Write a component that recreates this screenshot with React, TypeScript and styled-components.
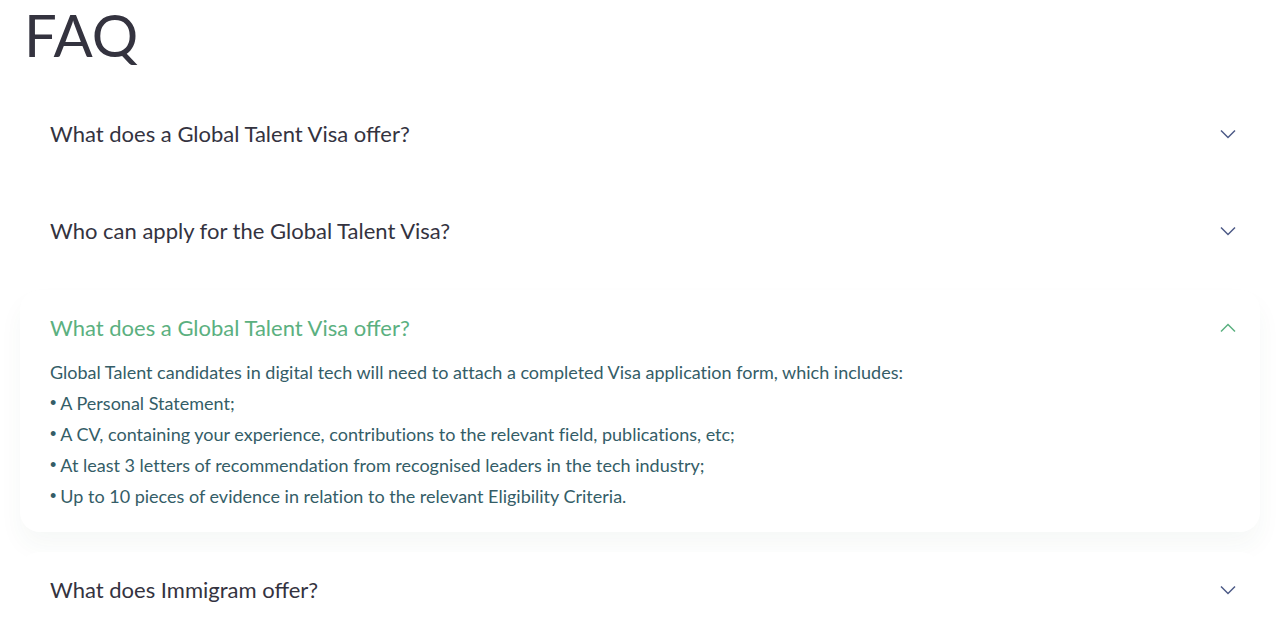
import { useState } from "react";
import styled, { createGlobalStyle } from "styled-components";

const GlobalStyle = createGlobalStyle`
  *, *::before, *::after { box-sizing: border-box; }
  body {
    margin: 0;
    background: #fff;
    color: #34333f;
    font-family: Lato, "Open Sans", sans-serif;
  }
`;

const Page = styled.main`
  padding: 0 20px;
`;

const Title = styled.h1`
  margin: 0 0 26px;
  padding-left: 4px;
  font-size: 58px;
  font-weight: 400;
  line-height: 70px;
`;

const List = styled.div`
  display: flex;
  flex-direction: column;
  gap: 20px;
`;

const Card = styled.section<{ $open: boolean }>`
  position: relative;
  padding: 20px 24px 20px 30px;
  border-radius: 20px;
  background: #fff;
  box-shadow: ${({ $open }) => ($open ? "0 14px 24px rgba(47, 85, 80, 0.045)" : "none")};
`;

const Heading = styled.h2`
  margin: 0;
  font-size: 22px;
  font-weight: 400;
`;

const Toggle = styled.button<{ $open: boolean }>`
  display: flex;
  align-items: center;
  justify-content: space-between;
  width: 100%;
  padding: 0 0 2px;
  border: 0;
  background: none;
  color: ${({ $open }) => ($open ? "#5bb080" : "#34333f")};
  font: inherit;
  line-height: 35px;
  text-align: left;
  cursor: pointer;
`;

const Chevron = styled.svg<{ $open: boolean }>`
  flex: none;
  width: 16px;
  height: 10px;
  fill: none;
  stroke: ${({ $open }) => ($open ? "#5bb080" : "#4d5a87")};
  stroke-width: 1.5;
`;

const Answer = styled.div`
  margin-top: 10px;
  color: #345d67;
  font-size: 18px;
  line-height: 31px;
  font-variant-ligatures: no-common-ligatures;
`;

const Paragraph = styled.p`
  margin: 0;
`;

const Points = styled.ul`
  margin: 0;
  padding: 0;
  list-style: none;
`;

const Point = styled.li`
  display: flex;
  gap: 4px;

  &::before {
    content: "•";
    font-family: "Liberation Sans", sans-serif;
  }
`;

interface Entry {
  question: string;
  intro: string;
  points: string[];
}

const requirements = {
  intro:
    "Global Talent candidates in digital tech will need to attach a completed Visa application form, which includes:",
  points: [
    "A Personal Statement;",
    "A CV, containing your experience, contributions to the relevant field, publications, etc;",
    "At least 3 letters of recommendation from recognised leaders in the tech industry;",
    "Up to 10 pieces of evidence in relation to the relevant Eligibility Criteria.",
  ],
};

const entries: Entry[] = [
  { question: "What does a Global Talent Visa offer?", ...requirements },
  { question: "Who can apply for the Global Talent Visa?", ...requirements },
  { question: "What does a Global Talent Visa offer?", ...requirements },
  { question: "What does Immigram offer?", ...requirements },
];

export default function App() {
  const [active, setActive] = useState<number | null>(2);

  return (
    <>
      <GlobalStyle />
      <Page>
        <Title>FAQ</Title>
        <List>
          {entries.map((entry, index) => {
            const open = index === active;
            return (
              <Card key={index} $open={open}>
                <Heading>
                  <Toggle
                    type="button"
                    $open={open}
                    aria-expanded={open}
                    aria-controls={`answer-${index}`}
                    onClick={() => setActive(open ? null : index)}
                  >
                    {entry.question}
                    <Chevron $open={open} viewBox="0 0 16 10" aria-hidden="true">
                      <path d={open ? "M1 8.5 8 1.5 15 8.5" : "M1 1.5 8 8.5 15 1.5"} />
                    </Chevron>
                  </Toggle>
                </Heading>
                {open && (
                  <Answer id={`answer-${index}`}>
                    <Paragraph>{entry.intro}</Paragraph>
                    <Points>
                      {entry.points.map((point) => (
                        <Point key={point}>{point}</Point>
                      ))}
                    </Points>
                  </Answer>
                )}
              </Card>
            );
          })}
        </List>
      </Page>
    </>
  );
}
